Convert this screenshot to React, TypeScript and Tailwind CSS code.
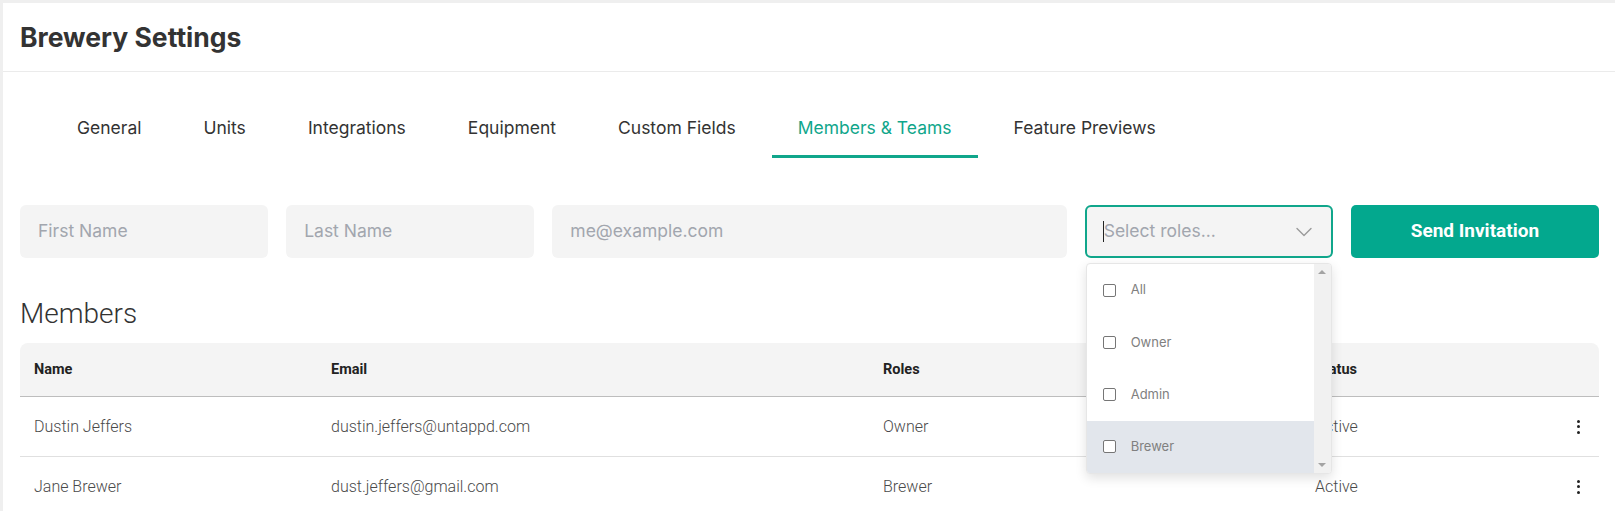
import { ChevronDown } from "lucide-react";

const tabs = ["General", "Units", "Integrations", "Equipment", "Custom Fields", "Members & Teams", "Feature Previews"];
const roles = ["All", "Owner", "Admin", "Brewer"];
const members = [
  { name: "Dustin Jeffers", email: "dustin.jeffers@untappd.com", role: "Owner", status: "Active" },
  { name: "Jane Brewer", email: "dust.jeffers@gmail.com", role: "Brewer", status: "Active" },
];

function Kebab() {
  return (
    <div className="flex flex-col items-center gap-[2.5px]">
      <span className="h-[3px] w-[3px] rounded-full bg-[#222]" />
      <span className="h-[3px] w-[3px] rounded-full bg-[#222]" />
      <span className="h-[3px] w-[3px] rounded-full bg-[#222]" />
    </div>
  );
}

function RolesDropdown() {
  return (
    <div className="absolute left-px right-px top-[calc(100%+5px)] z-20 flex h-[211px] overflow-hidden rounded-[4px] border border-[#e6e6e6] bg-white shadow-[0_4px_12px_rgba(0,0,0,0.12)]">
      <ul className="flex flex-1 flex-col">
        {roles.map((r) => (
          <li
            key={r}
            className={`flex h-[52.5px] items-center gap-[15px] pl-[16px] ${r === "Brewer" ? "bg-[#e2e6ec]" : ""}`}
          >
            <span className="h-[13px] w-[13px] rounded-[2px] border border-[#767676] bg-white" />
            <span className="font-['Inter'] text-[13px] text-[#808080]">{r}</span>
          </li>
        ))}
      </ul>
      {/* scrollbar */}
      <div className="flex w-[17px] flex-col items-center justify-between bg-[#f1f1f1] py-[6px]">
        <span className="h-0 w-0 border-x-[4px] border-b-[4px] border-x-transparent border-b-[#a3a3a3]" />
        <span className="h-0 w-0 border-x-[4px] border-t-[4px] border-x-transparent border-t-[#a3a3a3]" />
      </div>
    </div>
  );
}

export default function App() {
  return (
    <div className="h-[511px] w-full overflow-hidden bg-[#efefef] pl-[3px] pt-[3px]">
      <main className="h-full bg-white">
        {/* Header */}
        <header className="flex h-[69px] items-center border-b border-[#ebebeb] px-[17px]">
          <h1 className="pt-[2px] font-['Inter'] text-[26.5px] font-bold text-[#333]">Brewery Settings</h1>
        </header>

        {/* Tabs */}
        <nav className="flex gap-[10px] pl-[48px] pt-[29px]">
          {tabs.map((t) => {
            const active = t === "Members & Teams";
            return (
              <div
                key={t}
                className={`flex h-[57px] items-center border-b-[3px] px-[26px] font-['Inter'] text-[17.5px] ${
                  active ? "border-[#10a68b] text-[#10a68b]" : "border-transparent text-[#333]"
                }`}
              >
                {t}
              </div>
            );
          })}
        </nav>

        <div className="pl-[17px] pr-[16px]">
          {/* Invite form */}
          <div className="mt-[47px] grid h-[53px] grid-cols-6 gap-[18px] font-['Inter'] text-[17.5px]">
            <div className="flex items-center rounded-[6px] bg-[#f4f4f4] px-[18px] text-[#a2a6ae]">First Name</div>
            <div className="flex items-center rounded-[6px] bg-[#f4f4f4] px-[18px] text-[#a2a6ae]">Last Name</div>
            <div className="col-span-2 flex items-center rounded-[6px] bg-[#f4f4f4] px-[18px] text-[#a2a6ae]">
              me@example.com
            </div>
            <div className="relative">
              <div className="flex h-full items-center rounded-[6px] border-2 border-[#10a68b] bg-[#f4f4f4] pl-[16px] pr-[13px]">
                <span className="h-[21px] w-px bg-[#222]" />
                <span className="flex-1 text-[#a2a6ae]">Select roles...</span>
                <ChevronDown className="h-[28px] w-[28px] text-[#9a9a9a]" strokeWidth={1.2} />
              </div>
              <RolesDropdown />
            </div>
            <button className="rounded-[5px] bg-[#03a88e] font-['Roboto'] text-[19px] font-bold text-white">
              Send Invitation
            </button>
          </div>

          {/* Members */}
          <h2 className="mt-[40px] font-['Roboto'] text-[28px] font-light leading-[32px] text-[#333]">Members</h2>

          <div className="mt-[13px] font-['Roboto']">
            <div className="grid h-[54px] grid-cols-[297px_552px_432px_1fr_42px] items-center rounded-t-[8px] border-b border-[#bdbdbd] bg-[#f4f4f4] text-[14.5px] font-bold text-[#222]">
              <div className="px-[14px]">Name</div>
              <div className="px-[14px]">Email</div>
              <div className="px-[14px]">Roles</div>
              <div className="px-[14px]">Status</div>
              <div />
            </div>
            {members.map((m) => (
              <div
                key={m.email}
                className="grid h-[60px] grid-cols-[297px_552px_432px_1fr_42px] items-center border-b border-[#e0e0e0] text-[16px] font-light text-[#4a4a4a]"
              >
                <div className="px-[14px]">{m.name}</div>
                <div className="px-[14px]">{m.email}</div>
                <div className="px-[14px]">{m.role}</div>
                <div className="px-[14px]">{m.status}</div>
                <div className="flex justify-center">
                  <Kebab />
                </div>
              </div>
            ))}
          </div>
        </div>
      </main>
    </div>
  );
}
